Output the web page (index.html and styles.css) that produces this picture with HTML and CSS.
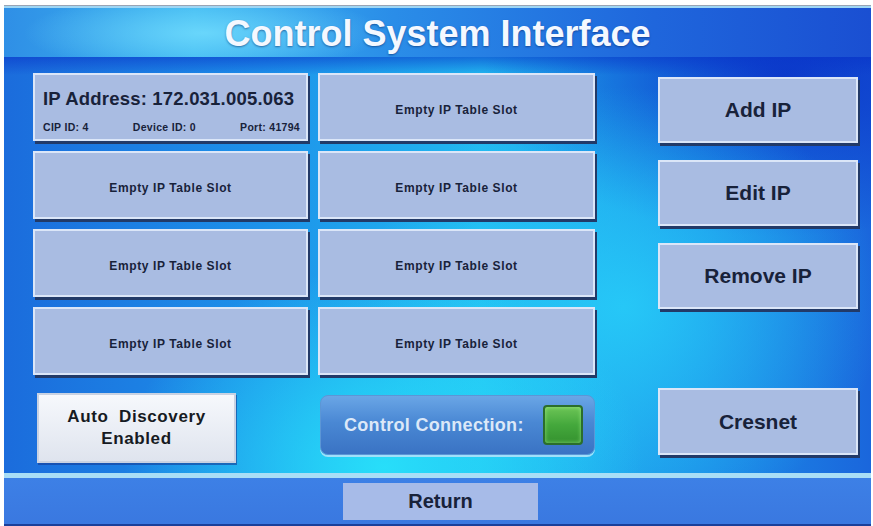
FILE: index.html
```html
<!DOCTYPE html>
<html lang="en">
<head>
    <meta charset="UTF-8">
    <meta name="viewport" content="width=device-width, initial-scale=1.0">
    <title>Control System Interface</title>
    <link rel="stylesheet" href="styles.css">
</head>
<body>
    <div class="screen">
        <!-- Title Bar -->
        <header class="title-bar">
            <h1>Control System Interface</h1>
        </header>

        <main class="panel">
            <div class="table-area">
                <!-- IP Table -->
                <div class="slots">
                    <button class="slot slot-filled">
                        <span class="ip-line">IP Address: 172.031.005.063</span>
                        <span class="ip-meta">
                            <span>CIP ID: 4</span>
                            <span>Device ID: 0</span>
                            <span>Port: 41794</span>
                        </span>
                    </button>
                    <button class="slot">Empty IP Table Slot</button>
                    <button class="slot">Empty IP Table Slot</button>
                    <button class="slot">Empty IP Table Slot</button>
                    <button class="slot">Empty IP Table Slot</button>
                    <button class="slot">Empty IP Table Slot</button>
                    <button class="slot">Empty IP Table Slot</button>
                    <button class="slot">Empty IP Table Slot</button>
                </div>

                <!-- Table Actions -->
                <div class="actions">
                    <button class="action-btn">Add IP</button>
                    <button class="action-btn">Edit IP</button>
                    <button class="action-btn">Remove IP</button>
                </div>
            </div>

            <div class="bottom-row">
                <div class="cell">
                    <button class="discovery-btn">Auto&nbsp; Discovery<br>Enabled</button>
                </div>
                <div class="cell">
                    <div class="connection">
                        <span>Control Connection:</span>
                        <span class="led"></span>
                    </div>
                </div>
                <div class="cell">
                    <button class="action-btn cresnet-btn">Cresnet</button>
                </div>
            </div>
        </main>

        <footer class="footer">
            <button class="return-btn">Return</button>
        </footer>
    </div>
</body>
</html>
```

FILE: styles.css
```css
:root {
    --slot-color: #a9bce2;
    --slot-light: #dbe6f8;
    --slot-dark: #223a68;
    --text-dark: #18223a;
}

* {
    margin: 0;
    padding: 0;
    box-sizing: border-box;
}

body {
    background: #ffffff;
    font-family: 'Liberation Sans', Arial, sans-serif;
    width: 873px;
    height: 526px;
    overflow: hidden;
}

.screen {
    margin-left: 4px;
    margin-top: 5px;
    width: 867px;
    height: 521px;
    display: flex;
    flex-direction: column;
    border-top: 1px solid #9aa4b4;
}

/* Title bar */
.title-bar {
    height: 51px;
    border-top: 2px solid #9fd6f4;
    background:
        radial-gradient(ellipse 180px 40px at 200px 25px, rgba(120, 225, 255, 0.75), transparent),
        linear-gradient(90deg, #2f8fe6 0%, #3cb6f0 22%, #2a8de8 45%, #1f66dc 75%, #1a4fd2 100%);
    display: flex;
    align-items: center;
    justify-content: center;
}

.title-bar h1 {
    color: #f4f8ff;
    font-size: 36px;
    font-weight: bold;
    text-shadow: 0 1px 2px rgba(0, 30, 90, 0.5);
    margin-top: 3px;
}

/* Main panel */
.panel {
    height: 416px;
    padding: 16px 0 0 29px;
    background:
        linear-gradient(180deg, rgba(8, 50, 200, 0.55) 0px, rgba(8, 50, 200, 0) 18px),
        radial-gradient(ellipse 260px 200px at 380px 410px, rgba(40, 225, 250, 0.95), transparent),
        radial-gradient(ellipse 260px 220px at 620px 250px, rgba(40, 210, 250, 0.8), transparent),
        radial-gradient(ellipse 300px 160px at 780px 20px, rgba(10, 50, 200, 0.9), transparent),
        linear-gradient(90deg, #1b6cdc 0%, #1d92ea 30%, #22b8f0 55%, #1c8fe8 80%, #1a66dc 100%);
}

.table-area {
    display: flex;
    align-items: flex-start;
}

.slots {
    display: grid;
    grid-template-columns: 275px 277px;
    grid-auto-rows: 68px;
    gap: 10px;
}

.slot,
.action-btn,
.return-btn {
    background: var(--slot-color);
    border: 2px solid var(--slot-light);
    box-shadow: 2px 3px 0 var(--slot-dark);
    color: var(--text-dark);
    font-family: 'Liberation Sans', Arial, sans-serif;
    font-weight: bold;
    cursor: pointer;
}

.slot {
    font-size: 12px;
    letter-spacing: 0.6px;
    padding-top: 5px;
}

.slot-filled {
    display: flex;
    flex-direction: column;
    padding: 10px 6px 0 8px;
}

.ip-line {
    font-size: 18.5px;
    letter-spacing: 0.2px;
    line-height: 28px;
    text-align: left;
}

.ip-meta {
    display: flex;
    justify-content: space-between;
    font-size: 10.5px;
    letter-spacing: 0.3px;
    margin-top: 8px;
}

.actions {
    margin-left: 63px;
    margin-top: 4px;
    width: 200px;
    display: flex;
    flex-direction: column;
    gap: 17px;
}

.action-btn {
    height: 66px;
    font-size: 21px;
}

/* Bottom row */
.bottom-row {
    display: grid;
    grid-template-columns: 285px 340px 200px;
    margin-top: 13px;
    align-items: start;
}

.discovery-btn {
    margin: 5px 0 0 4px;
    width: 199px;
    height: 70px;
    background: linear-gradient(180deg, #f6f8fc, #dfe4ee);
    border: 2px solid #c9d2e2;
    box-shadow: 1px 2px 0 rgba(20, 60, 150, 0.6);
    color: #161a22;
    font-family: 'Liberation Sans', Arial, sans-serif;
    font-weight: bold;
    font-size: 17px;
    letter-spacing: 0.6px;
    line-height: 22px;
    cursor: pointer;
}

.connection {
    margin: 7px 0 0 2px;
    width: 275px;
    height: 60px;
    border-radius: 8px;
    background: linear-gradient(180deg, #6aa6e6 0%, #4a88d4 45%, #3a73c4 100%);
    border: 1px solid #5c96d6;
    box-shadow: 0 2px 0 #9fe0fa;
    display: flex;
    align-items: center;
    justify-content: space-between;
    padding: 0 11px 0 23px;
    color: #dce8f8;
    font-size: 18px;
    font-weight: bold;
    letter-spacing: 0.3px;
}

.led {
    width: 40px;
    height: 40px;
    border-radius: 4px;
    border: 2px solid #2b6e2c;
    background: linear-gradient(180deg, #6cc456 0%, #44a83c 50%, #35922f 100%);
    box-shadow: inset 0 0 4px rgba(180, 255, 150, 0.6);
}

.cresnet-btn {
    width: 200px;
    height: 67px;
}

/* Footer */
.footer {
    flex: 1;
    border-top: 5px solid #a9def6;
    border-bottom: 2px solid #1a3f9a;
    background: linear-gradient(180deg, #3d80e6, #3a78e0);
    padding: 5px 0 0 339px;
}

.return-btn {
    width: 195px;
    height: 37px;
    font-size: 20px;
    border: none;
    box-shadow: none;
    background: #a7bbe8;
}
```
